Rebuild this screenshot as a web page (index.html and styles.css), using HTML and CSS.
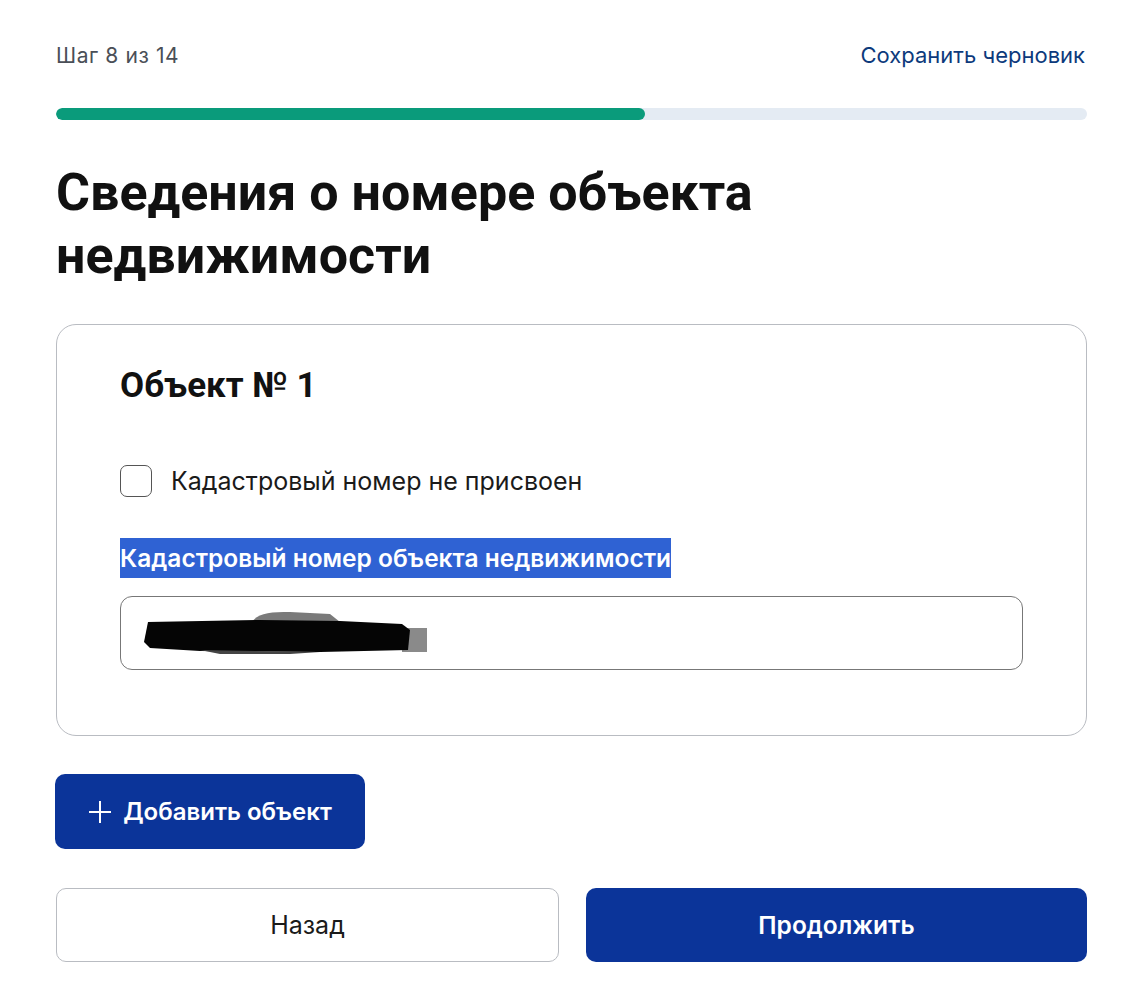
FILE: index.html
```html
<!DOCTYPE html>
<html lang="ru">
<head>
    <meta charset="UTF-8">
    <meta name="viewport" content="width=device-width, initial-scale=1.0">
    <title>Сведения о номере объекта недвижимости</title>
    <link rel="stylesheet" href="styles.css">
</head>
<body>
    <div class="page">
        <div class="step-row">
            <span class="step-text">Шаг 8 из 14</span>
            <a class="draft-link" href="#">Сохранить черновик</a>
        </div>

        <div class="progress">
            <div class="progress-fill" style="width: 57.1%"></div>
        </div>

        <h1 class="title">Сведения о номере объекта недвижимости</h1>

        <div class="object-card">
            <h2 class="object-title">Объект № 1</h2>

            <label class="check-row">
                <span class="checkbox"></span>
                <span class="check-label">Кадастровый номер не присвоен</span>
            </label>

            <div class="field">
                <span class="field-label"><span class="selected">Кадастровый номер объекта недвижимости</span></span>
                <div class="field-input">
                    <svg class="redacted" width="290" height="48" viewBox="0 0 290 48">
                        <path d="M112 14 C118 5 130 4 150 4 L190 6 L200 14 Z" fill="#7a7a7a"/>
                        <rect x="262" y="20" width="25" height="24" fill="#8a8a8a"/>
                        <path d="M8 14 L120 12 L200 13 L262 16 L270 22 L268 42 L180 44 L60 43 L10 40 L4 34 L6 24 Z" fill="#050505"/>
                        <path d="M60 42 L180 44 L150 46 L80 46 Z" fill="#444"/>
                    </svg>
                </div>
            </div>
        </div>

        <button class="btn btn-add" type="button">
            <svg class="plus" width="24" height="24" viewBox="0 0 24 24">
                <path d="M12 1 V23 M1 12 H23" stroke="#fff" stroke-width="2" fill="none"/>
            </svg>
            Добавить объект
        </button>

        <div class="nav-row">
            <button class="btn btn-back" type="button">Назад</button>
            <button class="btn btn-next" type="button">Продолжить</button>
        </div>
    </div>
</body>
</html>
```

FILE: styles.css
```css
:root {
    --blue: #0b3499;
    --green: #0a9b7b;
    --track: #e4ebf3;
    --text: #111;
}

* {
    margin: 0;
    padding: 0;
    box-sizing: border-box;
}

body {
    background: #fff;
    font-family: Inter, "Noto Sans", sans-serif;
    color: var(--text);
}

.page {
    width: 1031px;
    margin-left: 56px;
    padding-top: 42px;
}

.step-row {
    display: flex;
    justify-content: space-between;
    align-items: center;
    height: 26px;
}

.step-text {
    font-size: 21px;
    letter-spacing: 0.6px;
    color: #4a4f57;
}

.draft-link {
    font-size: 22px;
    color: #0d3a7c;
    text-decoration: none;
    margin-right: 2px;
}

.progress {
    margin-top: 40px;
    height: 12px;
    border-radius: 6px;
    background: var(--track);
    overflow: hidden;
}

.progress-fill {
    height: 100%;
    background: var(--green);
    border-radius: 6px;
}

.title {
    font-family: Roboto, "Liberation Sans", sans-serif;
    font-weight: 700;
    font-size: 52px;
    line-height: 63px;
    width: 760px;
    margin-top: 41px;
    color: #111;
}

.object-card {
    margin-top: 37px;
    border: 1px solid #b9bcc2;
    border-radius: 20px;
    padding: 42px 63px 65px;
}

.object-title {
    font-family: Roboto, "Liberation Sans", sans-serif;
    font-size: 35px;
    font-weight: 700;
    line-height: 38px;
}

.check-row {
    display: flex;
    align-items: center;
    gap: 19px;
    margin-top: 60px;
}

.checkbox {
    width: 32px;
    height: 32px;
    border: 1.5px solid #555;
    border-radius: 7px;
}

.check-label {
    font-size: 25px;
    color: #1a1a1a;
}

.field-label {
    display: block;
    margin-top: 43px;
    font-size: 24.5px;
    font-weight: 600;
    line-height: 36px;
}

.selected {
    background: #2f62d3;
    color: #fff;
    padding: 5px 0;
}

.field-input {
    margin-top: 20px;
    height: 74px;
    border: 1.5px solid #777;
    border-radius: 12px;
    padding: 11px 0 0 19px;
}

.redacted {
    display: block;
}

.btn {
    font-family: Inter, "Noto Sans", sans-serif;
    border-radius: 10px;
    cursor: pointer;
}

.btn-add {
    margin-top: 38px;
    width: 310px;
    height: 75px;
    margin-left: -1px;
    background: var(--blue);
    color: #fff;
    border: none;
    font-size: 24px;
    font-weight: 600;
    display: flex;
    align-items: center;
    justify-content: center;
    gap: 11px;
}

.nav-row {
    display: flex;
    gap: 27px;
    margin-top: 39px;
}

.nav-row .btn {
    flex: 1;
    height: 74px;
}

.btn-back {
    background: #fff;
    border: 1px solid #b9bcc2;
    color: #1a1a1a;
    font-size: 25px;
}

.btn-next {
    background: var(--blue);
    border: none;
    color: #fff;
    font-size: 24.5px;
    font-weight: 600;
}
```
